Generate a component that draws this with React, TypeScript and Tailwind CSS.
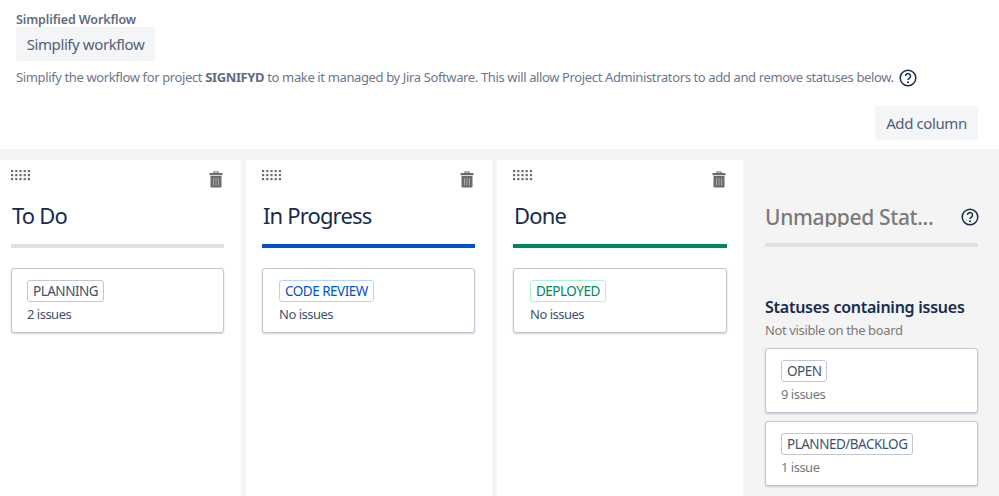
import React from "react";

const font = { fontFamily: '"Noto Sans", "Open Sans", sans-serif' };

function Grip() {
  const dots = [];
  for (let r = 0; r < 3; r++) for (let c = 0; c < 5; c++) dots.push(<rect key={`${r}-${c}`} x={c * 4.2} y={r * 4} width="2.2" height="2.2" fill="#6b6b6b" />);
  return <svg width="21" height="11" viewBox="0 0 21 11">{dots}</svg>;
}

function Trash() {
  return (
    <svg width="14" height="17" viewBox="0 0 14 17">
      <path d="M5 2V1h4v1" fill="none" stroke="#6b6b6b" strokeWidth="1.2" />
      <rect x="0.5" y="2" width="13" height="2.2" rx="0.5" fill="#6b6b6b" />
      <path d="M1.5 5h11v10.2a1.3 1.3 0 0 1-1.3 1.3H2.8a1.3 1.3 0 0 1-1.3-1.3z" fill="#6b6b6b" />
      <path d="M4.5 7v7.5M7 7v7.5M9.5 7v7.5" stroke="#a8a8a8" strokeWidth="1" />
    </svg>
  );
}

function Help() {
  return (
    <svg width="18" height="18" viewBox="0 0 18 18">
      <circle cx="9" cy="9" r="7.8" fill="none" stroke="#172b4d" strokeWidth="1.5" />
      <path d="M6.5 7.1a2.5 2.5 0 1 1 3.9 2c-.9.6-1.4 1-1.4 2" fill="none" stroke="#172b4d" strokeWidth="1.5" />
      <circle cx="9" cy="13.3" r="1" fill="#172b4d" />
    </svg>
  );
}

function Card({ tag, tagClass, note, noteClass, mt, pad }: { tag: string; tagClass: string; note: string; noteClass: string; mt?: string; pad?: string }) {
  return (
    <div className={`bg-white border border-[#c1c7d0] rounded-[3px] shadow-[0_1px_2px_rgba(9,30,66,0.2)] pt-[11px] h-[65px] ${pad ?? "pl-[15px]"} ${mt ?? ""}`}>
      <span className={`block w-fit h-[22px] px-[5px] border rounded-[3px] text-[13.5px] tracking-[-0.5px] leading-[21px] ${tagClass}`}>{tag}</span>
      <div className={`text-[13px] tracking-[-0.5px] leading-[20px] mt-[2px] ${noteClass}`}>{note}</div>
    </div>
  );
}

function Column({ title, bar, tag, tagClass, note, width, inner, pad }: { title: string; bar: string; tag: string; tagClass: string; note: string; width: string; inner: string; pad: string }) {
  return (
    <div className={`bg-white h-[336px] ${width} flex flex-col`}>
      <div className={`${inner} flex-none`}>
        <div className="flex justify-between h-[26px] pt-[10px]">
          <Grip />
          <div className="mr-[1px] mt-[1px]"><Trash /></div>
        </div>
        <div className="mt-[13px] h-[32px] text-[#172b4d] text-[22px] tracking-[-0.85px] leading-[32px] pl-[1px]">{title}</div>
        <div className={`mt-[13px] h-[4px] ${bar}`} />
        <div className="mt-[20px]">
          <Card tag={tag} tagClass={tagClass} note={note} noteClass="text-[#42526e]" pad={pad} />
        </div>
      </div>
    </div>
  );
}

export default function App() {
  return (
    <div style={font} className="w-[999px] h-[496px] overflow-hidden bg-[#f4f4f5]">
      <div className="bg-white h-[149px] pl-4 pr-[21px] pt-[11px] flex flex-col">
        <div className="text-[#5e6c84] text-[12.5px] tracking-[-0.1px] font-semibold leading-[18px] h-[16px]">Simplified Workflow</div>
        <button className="self-start h-[34px] w-[139px] rounded-[3px] bg-[#f4f5f7] text-[#505f79] text-[15px] tracking-[-0.4px] text-center">Simplify workflow</button>
        <div className="mt-[6px] flex items-center text-[#6b778c] text-[13px] tracking-[-0.37px] leading-[20px] h-[20px] whitespace-nowrap">
          <span>Simplify the workflow for project <b className="font-bold text-[#5e6c84]">SIGNIFYD</b> to make it managed by Jira Software. This will allow Project Administrators to add and remove statuses below.</span>
          <span className="ml-[5px] mt-[1px]"><Help /></span>
        </div>
        <button className="self-end mt-[19px] h-[34px] w-[103px] rounded-[3px] bg-[#f4f5f7] text-[#505f79] text-[15px] tracking-[-0.4px] text-center">Add column</button>
      </div>
      <div className="flex mt-[11px]">
        <Column width="w-[241px] pl-[11px]" inner="w-[213px]" pad="pl-[15px]" title="To Do" bar="bg-[#dfe1e6]" tag="PLANNING" tagClass="border-[#c1c7d0] text-[#42526e]" note="2 issues" />
        <div className="w-[5px]" />
        <Column width="w-[246px] pl-[16px]" inner="w-[213px]" pad="pl-[16px]" title="In Progress" bar="bg-[#0052cc]" tag="CODE REVIEW" tagClass="border-[#b3d4ff] text-[#0052cc]" note="No issues" />
        <div className="w-[5px]" />
        <Column width="w-[246px] pl-[16px]" inner="w-[214px]" pad="pl-[16px]" title="Done" bar="bg-[#00875a]" tag="DEPLOYED" tagClass="border-[#abf5d1] text-[#00875a]" note="No issues" />
        <div className="flex-none w-[213px] ml-[22px]">
          <div className="flex justify-between items-center h-[22px] mt-[45px]">
            <span className="block h-[22px] overflow-hidden text-[#7a7a7a] text-[21px] tracking-[-0.35px] font-medium leading-[24px] whitespace-nowrap">Unmapped Stat...</span>
            <span className="mt-[2px] -mr-[1px]"><Help /></span>
          </div>
          <div className="mt-[16px] h-[4px] bg-[#dfe1e6]" />
          <div className="mt-[50px] text-[#172b4d] text-[16px] tracking-[-0.25px] font-semibold leading-[20px]">Statuses containing issues</div>
          <div className="mt-[4px] text-[#7a7a7a] text-[13px] tracking-[-0.37px] leading-[18px]">Not visible on the board</div>
          <div className="mt-[9px]">
            <Card tag="OPEN" tagClass="border-[#c1c7d0] text-[#42526e]" note="9 issues" noteClass="text-[#7a7a7a]" />
            <Card mt="mt-[8px]" tag="PLANNED/BACKLOG" tagClass="border-[#c1c7d0] text-[#42526e]" note="1 issue" noteClass="text-[#7a7a7a]" />
          </div>
        </div>
      </div>
    </div>
  );
}
